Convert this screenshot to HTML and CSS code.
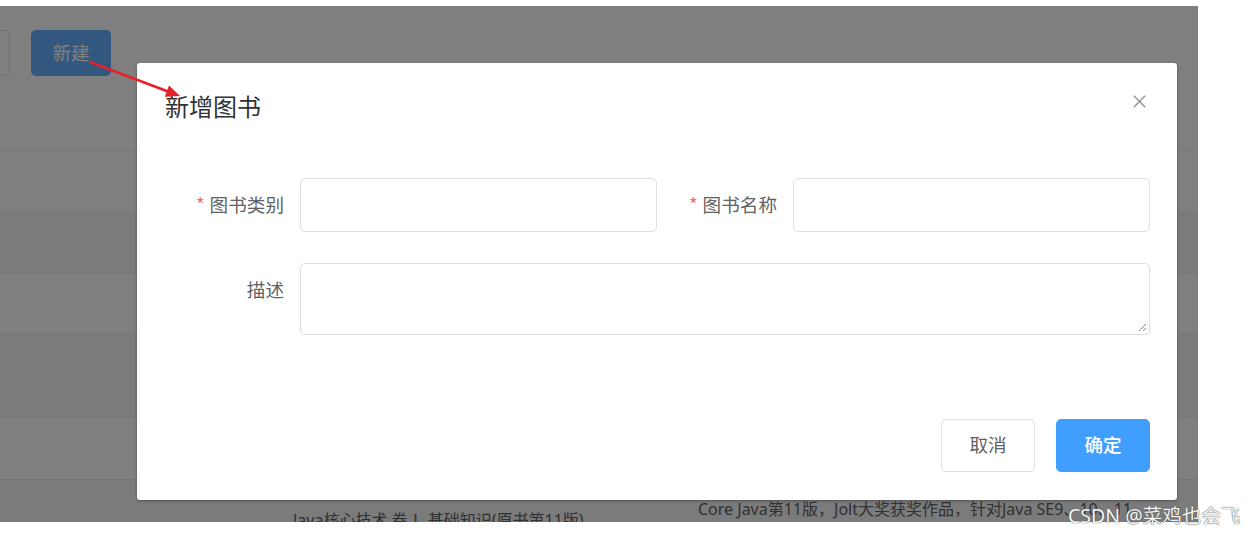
FILE: index.html
```html
<!DOCTYPE html>
<html lang="zh-CN">
<head>
<meta charset="utf-8">
<title>新增图书</title>
<link rel="stylesheet" href="styles.css">
</head>
<body>
<div class="screen">
  <div class="app">
    <div class="toolbar">
      <div class="search"></div>
      <button class="btn-new">新建</button>
    </div>
    <div class="table">
      <div class="row row-a"></div>
      <div class="row row-b stripe"></div>
      <div class="row row-c"></div>
      <div class="row row-d stripe"></div>
      <div class="row row-e"></div>
      <div class="row row-f stripe">
        <div class="cell cell-name">Java核心技术 卷Ⅰ 基础知识(原书第11版)</div>
        <div class="cell cell-desc">Core Java第11版，Jolt大奖获奖作品，针对Java SE9、10、11</div>
      </div>
    </div>
  </div>
  <div class="mask"></div>
  <div class="dialog">
    <div class="dialog-header">
      <span class="dialog-title">新增图书</span>
      <svg class="dialog-close" width="13" height="13" viewBox="0 0 13 13"><path d="M0.8 0.8 L12.2 12.2 M12.2 0.8 L0.8 12.2" stroke="#909399" stroke-width="1.4" fill="none"/></svg>
    </div>
    <div class="dialog-body">
      <div class="form-row">
        <div class="form-item">
          <label class="form-label"><span class="req">*</span>图书类别</label>
          <div class="input"></div>
        </div>
        <div class="form-item">
          <label class="form-label"><span class="req">*</span>图书名称</label>
          <div class="input"></div>
        </div>
      </div>
      <div class="form-row form-row-last">
        <div class="form-item form-item-full">
          <label class="form-label">描述</label>
          <div class="textarea">
            <svg class="resize" width="9" height="9" viewBox="0 0 9 9"><path d="M1 8 L8 1 M5 8 L8 5" stroke="#8a8a8a" stroke-width="1" fill="none"/></svg>
          </div>
        </div>
      </div>
    </div>
    <div class="dialog-footer">
      <button class="btn btn-cancel">取消</button>
      <button class="btn btn-primary">确定</button>
    </div>
  </div>
</div>
<svg class="arrow" width="1259" height="536" viewBox="0 0 1259 536">
  <line x1="90" y1="62" x2="168" y2="91.5" stroke="#e8202a" stroke-width="2.6"/>
  <polygon points="180,96 164.8,96.7 169,85.5" fill="#e8202a"/>
</svg>
<div class="watermark">CSDN @菜鸡也会飞</div>
</body>
</html>
```

FILE: styles.css
```css
* { box-sizing: border-box; }

body {
  margin: 0;
  background: #ffffff;
  width: 1259px;
  height: 536px;
  overflow: hidden;
  position: relative;
  font-family: "Noto Sans", "Noto Sans CJK SC", sans-serif;
}

.screen {
  margin-top: 6px;
  width: 1198px;
  height: 516px;
  position: relative;
  overflow: hidden;
  background: #ffffff;
}

.app {
  display: flex;
  flex-direction: column;
}

.toolbar {
  display: flex;
  align-items: flex-start;
  gap: 21px;
  padding-top: 24px;
  height: 144px;
}

.search {
  width: 10px;
  height: 46px;
  border: 1px solid #dcdfe6;
  border-left: none;
  border-radius: 0 5px 5px 0;
}

.btn-new {
  width: 80px;
  height: 46px;
  border: none;
  border-radius: 5px;
  background: #66b1ff;
  color: #ffffff;
  font-family: "Noto Sans CJK SC", sans-serif;
  font-size: 18.6px;
  padding: 0 0 3px;
}

.table {
  display: flex;
  flex-direction: column;
  border-top: 1px solid #ebeef5;
}

.row {
  border-bottom: 1px solid #ebeef5;
  display: flex;
  align-items: flex-start;
  background: #ffffff;
}
.stripe { background: #f6f6f6; }
.row-a { height: 62px; }
.row-b { height: 61px; }
.row-c { height: 60px; }
.row-d { height: 84px; }
.row-e { height: 62px; }
.row-f { height: 100px; border-bottom: none; }

.cell {
  font-family: "Noto Sans", "Noto Sans CJK SC", sans-serif;
  font-size: 16px;
  color: #606266;
  white-space: nowrap;
  line-height: 22px;
}
.cell-name {
  margin-left: 293px;
  padding-top: 29px;
  width: 405px;
}
.cell-desc {
  padding-top: 18px;
  width: 460px;
}

.mask {
  position: absolute;
  inset: 0;
  background: rgba(0, 0, 0, 0.5);
}

.dialog {
  position: absolute;
  left: 137px;
  top: 57px;
  width: 1040px;
  height: 437px;
  background: #ffffff;
  border-radius: 3px;
  box-shadow: 0 1px 3px rgba(0, 0, 0, 0.35);
  font-family: "Noto Sans CJK SC", sans-serif;
}

.dialog-header {
  position: relative;
  padding: 27px 27px 13px 28px;
  height: 72px;
}

.dialog-title {
  font-size: 24px;
  line-height: 32px;
  color: #303133;
  display: block;
}

.dialog-close {
  position: absolute;
  right: 31px;
  top: 32px;
}

.dialog-body {
  padding: 43px 27px 0 30px;
}

.form-row {
  display: flex;
  gap: 3px;
  margin-bottom: 31px;
}
.form-row-last { margin-bottom: 0; }

.form-item {
  display: flex;
  width: 490px;
}
.form-item-full { width: 983px; }

.form-label {
  width: 133px;
  flex: none;
  padding-right: 16px;
  text-align: right;
  font-size: 18.6px;
  line-height: 52px;
  color: #606266;
}

.req {
  color: #f56c6c;
  margin-right: 5px;
}

.input {
  flex: 1;
  height: 54px;
  border: 1px solid #dcdfe6;
  border-radius: 5px;
}

.textarea {
  flex: 1;
  height: 72px;
  border: 1px solid #dcdfe6;
  border-radius: 5px;
  position: relative;
}

.resize {
  position: absolute;
  right: 2px;
  bottom: 2px;
}

.dialog-footer {
  display: flex;
  justify-content: flex-end;
  gap: 21px;
  padding: 84px 27px 28px 0;
}

.btn {
  width: 94px;
  height: 53px;
  border-radius: 5px;
  font-family: "Noto Sans CJK SC", sans-serif;
  font-size: 18.6px;
  padding: 0 0 4px;
}
.btn-cancel {
  background: #ffffff;
  border: 1px solid #dcdfe6;
  color: #606266;
}
.btn-primary {
  background: #409eff;
  border: 1px solid #409eff;
  color: #ffffff;
  font-weight: 500;
}

.arrow {
  position: absolute;
  left: 0;
  top: 0;
  pointer-events: none;
}

.watermark {
  position: absolute;
  left: 1068px;
  top: 502px;
  font-family: "Noto Sans", "Noto Sans CJK SC", sans-serif;
  font-size: 19.5px;
  line-height: 28px;
  color: rgba(255, 255, 255, 0.95);
  text-shadow: 0 0 1px #5a5a5a, 0 0 1px #5a5a5a;
  white-space: nowrap;
}
```
